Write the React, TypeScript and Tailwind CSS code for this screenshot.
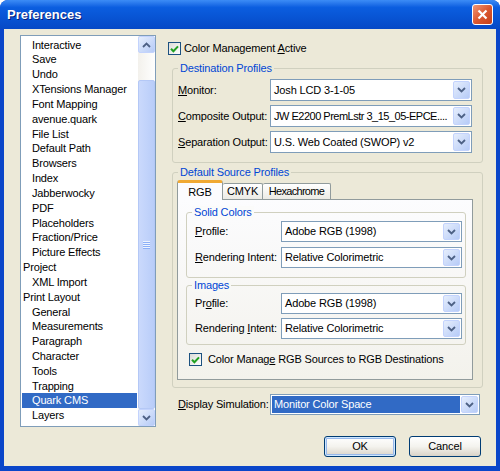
import type { ReactNode } from 'react'

const tree: [string, boolean][] = [
  ['Interactive', true],
  ['Save', true],
  ['Undo', true],
  ['XTensions Manager', true],
  ['Font Mapping', true],
  ['avenue.quark', true],
  ['File List', true],
  ['Default Path', true],
  ['Browsers', true],
  ['Index', true],
  ['Jabberwocky', true],
  ['PDF', true],
  ['Placeholders', true],
  ['Fraction/Price', true],
  ['Picture Effects', true],
  ['Project', false],
  ['XML Import', true],
  ['Print Layout', false],
  ['General', true],
  ['Measurements', true],
  ['Paragraph', true],
  ['Character', true],
  ['Tools', true],
  ['Trapping', true],
  ['Quark CMS', true],
  ['Layers', true],
]

function Chevron({ up }: { up?: boolean }) {
  return (
    <svg width="9" height="6" viewBox="0 0 9 6">
      <polyline
        points={up ? '1,5 4.5,1.5 8,5' : '1,1 4.5,4.5 8,1'}
        fill="none"
        stroke="currentColor"
        strokeWidth="1.8"
      />
    </svg>
  )
}

function Check() {
  return (
    <span className="flex h-[13px] w-[13px] shrink-0 items-center justify-center border border-[#1c5180] bg-gradient-to-br from-[#dcdcd7] to-white">
      <svg width="9" height="8" viewBox="0 0 9 8">
        <polyline points="1,3.8 3.4,6.3 8,1.4" fill="none" stroke="#21a121" strokeWidth="2" />
      </svg>
    </span>
  )
}

function Combo({
  value,
  className,
  active,
  textClass = '',
}: {
  value: string
  className: string
  active?: boolean
  textClass?: string
}) {
  return (
    <div className={`flex items-stretch border border-[#7f9db9] bg-white p-px ${className}`}>
      <div
        className={`flex min-w-0 flex-1 items-center overflow-hidden whitespace-nowrap pl-[2px] ${textClass} ${
          active ? 'mr-px bg-[#316ac5] text-white' : ''
        }`}
      >
        {value}
      </div>
      <div className="flex w-[17px] items-center justify-center rounded-[2px] border border-[#c3d3fd] bg-gradient-to-br from-[#e6eefc] to-[#b6cbf7] text-[#4d6185]">
        <Chevron />
      </div>
    </div>
  )
}

function Group({ label, labelBg, className, children }: { label: string; labelBg: string; className: string; children: ReactNode }) {
  return (
    <div className={`relative rounded-[3px] border border-[#d0d0bf] ${className}`}>
      <span className={`absolute -top-[7px] left-[5px] px-[2px] leading-[13px] text-[#0046d5] ${labelBg}`}>{label}</span>
      {children}
    </div>
  )
}

function ScrollBtn({ up }: { up?: boolean }) {
  return (
    <div className="flex h-[17px] shrink-0 items-center justify-center rounded-[2px] border border-[#c3d3fd] bg-gradient-to-br from-[#e6eefc] to-[#b6cbf7] text-[#4d6185]">
      <Chevron up={up} />
    </div>
  )
}

function Btn({ children, primary }: { children: ReactNode; primary?: boolean }) {
  return (
    <button
      className={`flex h-[21px] w-[72px] items-center justify-center rounded-[3px] border border-[#003c74] bg-gradient-to-b from-white via-[#f4f3ee] to-[#d9d3c8] ${
        primary ? 'shadow-[inset_0_0_0_1px_#cee7ff,inset_0_0_0_2px_#98b8ea]' : ''
      }`}
    >
      {children}
    </button>
  )
}

function U({ children }: { children: ReactNode }) {
  return <span className="underline underline-offset-[1px]">{children}</span>
}

export default function App() {
  return (
    <div className="flex h-[471px] w-[500px] flex-col overflow-hidden rounded-t-[8px] bg-[#0a46c9] font-['Liberation_Sans',Arial,sans-serif] text-[11px] leading-[13px] tracking-[-0.15px] text-black">
      {/* title bar */}
      <div className="flex h-[29px] shrink-0 items-center justify-between bg-gradient-to-b from-[#3c8cf6] via-[#0b5ee0] via-25% to-[#0649c6] pl-[7px] pr-[7px]">
        <span className="text-[13px] font-bold tracking-normal text-white [text-shadow:1px_1px_#0a1f7a]">Preferences</span>
        <div className="flex h-[21px] w-[21px] items-center justify-center rounded-[3px] border border-white bg-gradient-to-br from-[#f09674] via-[#db5830] to-[#c4401a]">
          <svg width="11" height="11" viewBox="0 0 11 11">
            <path d="M1.5 1.5 9.5 9.5M9.5 1.5 1.5 9.5" stroke="white" strokeWidth="2.2" />
          </svg>
        </div>
      </div>

      {/* body */}
      <div className="mx-[4px] mb-[5px] flex flex-1 bg-[#ece9d8] pl-[16px] pt-[6px]">
        {/* category list */}
        <div className="flex h-[392px] w-[136px] shrink-0 border border-[#7f9db9] bg-white">
          <div className="flex-1 overflow-hidden pt-[1.6px]">
            {tree.map(([name, indent]) => (
              <div
                key={name}
                className={`ml-px mr-px h-[14.84px] whitespace-nowrap leading-[14.84px] ${indent ? 'pl-[10px]' : 'pl-[1px]'} ${
                  name === 'Quark CMS' ? 'bg-[#316ac5] text-white' : ''
                }`}
              >
                {name}
              </div>
            ))}
          </div>
          <div className="flex w-[17px] flex-col bg-gradient-to-r from-[#f3f1ec] to-[#fefefe]">
            <ScrollBtn up />
            <div className="h-[27px] shrink-0" />
            <div className="flex flex-1 flex-col items-center justify-center gap-[1px] rounded-[2px] border border-[#b4c8f6] bg-gradient-to-r from-[#cad9fc] to-[#b9cdf9]">
              <div className="h-px w-[7px] bg-[#eef4fe] shadow-[0_1px_0_#8cb0f8]" />
              <div className="h-px w-[7px] bg-[#eef4fe] shadow-[0_1px_0_#8cb0f8]" />
              <div className="h-px w-[7px] bg-[#eef4fe] shadow-[0_1px_0_#8cb0f8]" />
              <div className="h-px w-[7px] bg-[#eef4fe] shadow-[0_1px_0_#8cb0f8]" />
            </div>
            <ScrollBtn />
          </div>
        </div>

        {/* settings */}
        <div className="ml-[12px] flex w-[315px] flex-col">
          <div className="mt-[7px] flex h-[13px] items-center gap-[3px]">
            <Check />
            <span>
              Color Management <U>A</U>ctive
            </span>
          </div>

          <Group label="Destination Profiles" labelBg="bg-[#ece9d8]" className="ml-[4px] mt-[13px] w-[311px] pb-[9px] pl-[5px] pr-[10px] pt-[10px]">
            <div className="flex flex-col gap-[4px]">
              <div className="flex items-center">
                <span className="w-[92px]">
                  <U>M</U>onitor:
                </span>
                <Combo value="Josh LCD 3-1-05" className="h-[22px] w-[202px]" />
              </div>
              <div className="flex items-center">
                <span className="w-[92px]">
                  <U>C</U>omposite Output:
                </span>
                <Combo
                  value="JW E2200 PremLstr 3_15_05-EPCE...."
                  className="h-[22px] w-[202px]"
                  textClass="tracking-[-0.5px]"
                />
              </div>
              <div className="flex items-center">
                <span className="w-[92px]">
                  <U>S</U>eparation Output:
                </span>
                <Combo value="U.S. Web Coated (SWOP) v2" className="h-[22px] w-[202px]" />
              </div>
            </div>
          </Group>

          <Group label="Default Source Profiles" labelBg="bg-[#ece9d8]" className="ml-[4px] mt-[9px] w-[311px] pb-[7px] pl-[4px] pr-[9px] pt-[7px]">
            <div className="flex h-[19px] items-end">
              <div className="relative z-10 -mb-px flex h-[20px] w-[46px] items-center justify-center rounded-t-[3px] border border-b-0 border-t-[3px] border-[#919b9c] border-t-[#f0a933] bg-[#fcfcfe] pt-px">
                RGB
              </div>
              <div className="flex h-[16px] w-[40px] items-center justify-center rounded-t-[2px] border border-b-0 border-l-0 border-[#919b9c] bg-gradient-to-b from-white to-[#ecebe5]">
                CMYK
              </div>
              <div className="flex h-[16px] w-[68px] items-center justify-center rounded-t-[2px] border border-b-0 border-l-0 border-[#919b9c] bg-gradient-to-b from-white to-[#ecebe5] tracking-[-0.7px]">
                Hexachrome
              </div>
            </div>
            <div className="w-[296px] border border-[#919b9c] bg-gradient-to-b from-[#fcfcfe] to-[#f3f2ec] pb-[13px] pl-[8px] pt-[12px]">
              <Group label="Solid Colors" labelBg="bg-[#fbfbfa]" className="w-[280px] pb-[9px] pl-[8px] pr-[3px] pt-[8px]">
                <div className="flex flex-col gap-[5px]">
                  <div className="flex items-center">
                    <span className="w-[86px]">
                      <U>P</U>rofile:
                    </span>
                    <Combo value="Adobe RGB (1998)" className="h-[21px] w-[181px]" />
                  </div>
                  <div className="flex items-center">
                    <span className="w-[86px]">
                      <U>R</U>endering Intent:
                    </span>
                    <Combo value="Relative Colorimetric" className="h-[21px] w-[181px]" />
                  </div>
                </div>
              </Group>
              <Group label="Images" labelBg="bg-[#f8f8f5]" className="mt-[7px] w-[280px] pb-[5px] pl-[8px] pr-[3px] pt-[7px]">
                <div className="flex flex-col gap-[4px]">
                  <div className="flex items-center">
                    <span className="w-[86px]">
                      Pr<U>o</U>file:
                    </span>
                    <Combo value="Adobe RGB (1998)" className="h-[21px] w-[181px]" />
                  </div>
                  <div className="flex items-center">
                    <span className="w-[86px]">
                      Rendering <U>I</U>ntent:
                    </span>
                    <Combo value="Relative Colorimetric" className="h-[21px] w-[181px]" />
                  </div>
                </div>
              </Group>
              <div className="mt-[8px] flex h-[13px] items-center gap-[6px] pl-[3px]">
                <Check />
                <span>
                  Color Manag<U>e</U> RGB Sources to RGB Destinations
                </span>
              </div>
            </div>
          </Group>

          <div className="ml-[10px] mt-[6px] flex items-center">
            <span className="w-[92px]">
              <U>D</U>isplay Simulation:
            </span>
            <Combo value="Monitor Color Space" className="h-[21px] w-[210px]" active />
          </div>

          <div className="mt-[21px] flex justify-end gap-[13px] pr-[2px]">
            <Btn primary>OK</Btn>
            <Btn>Cancel</Btn>
          </div>
        </div>
      </div>
    </div>
  )
}
